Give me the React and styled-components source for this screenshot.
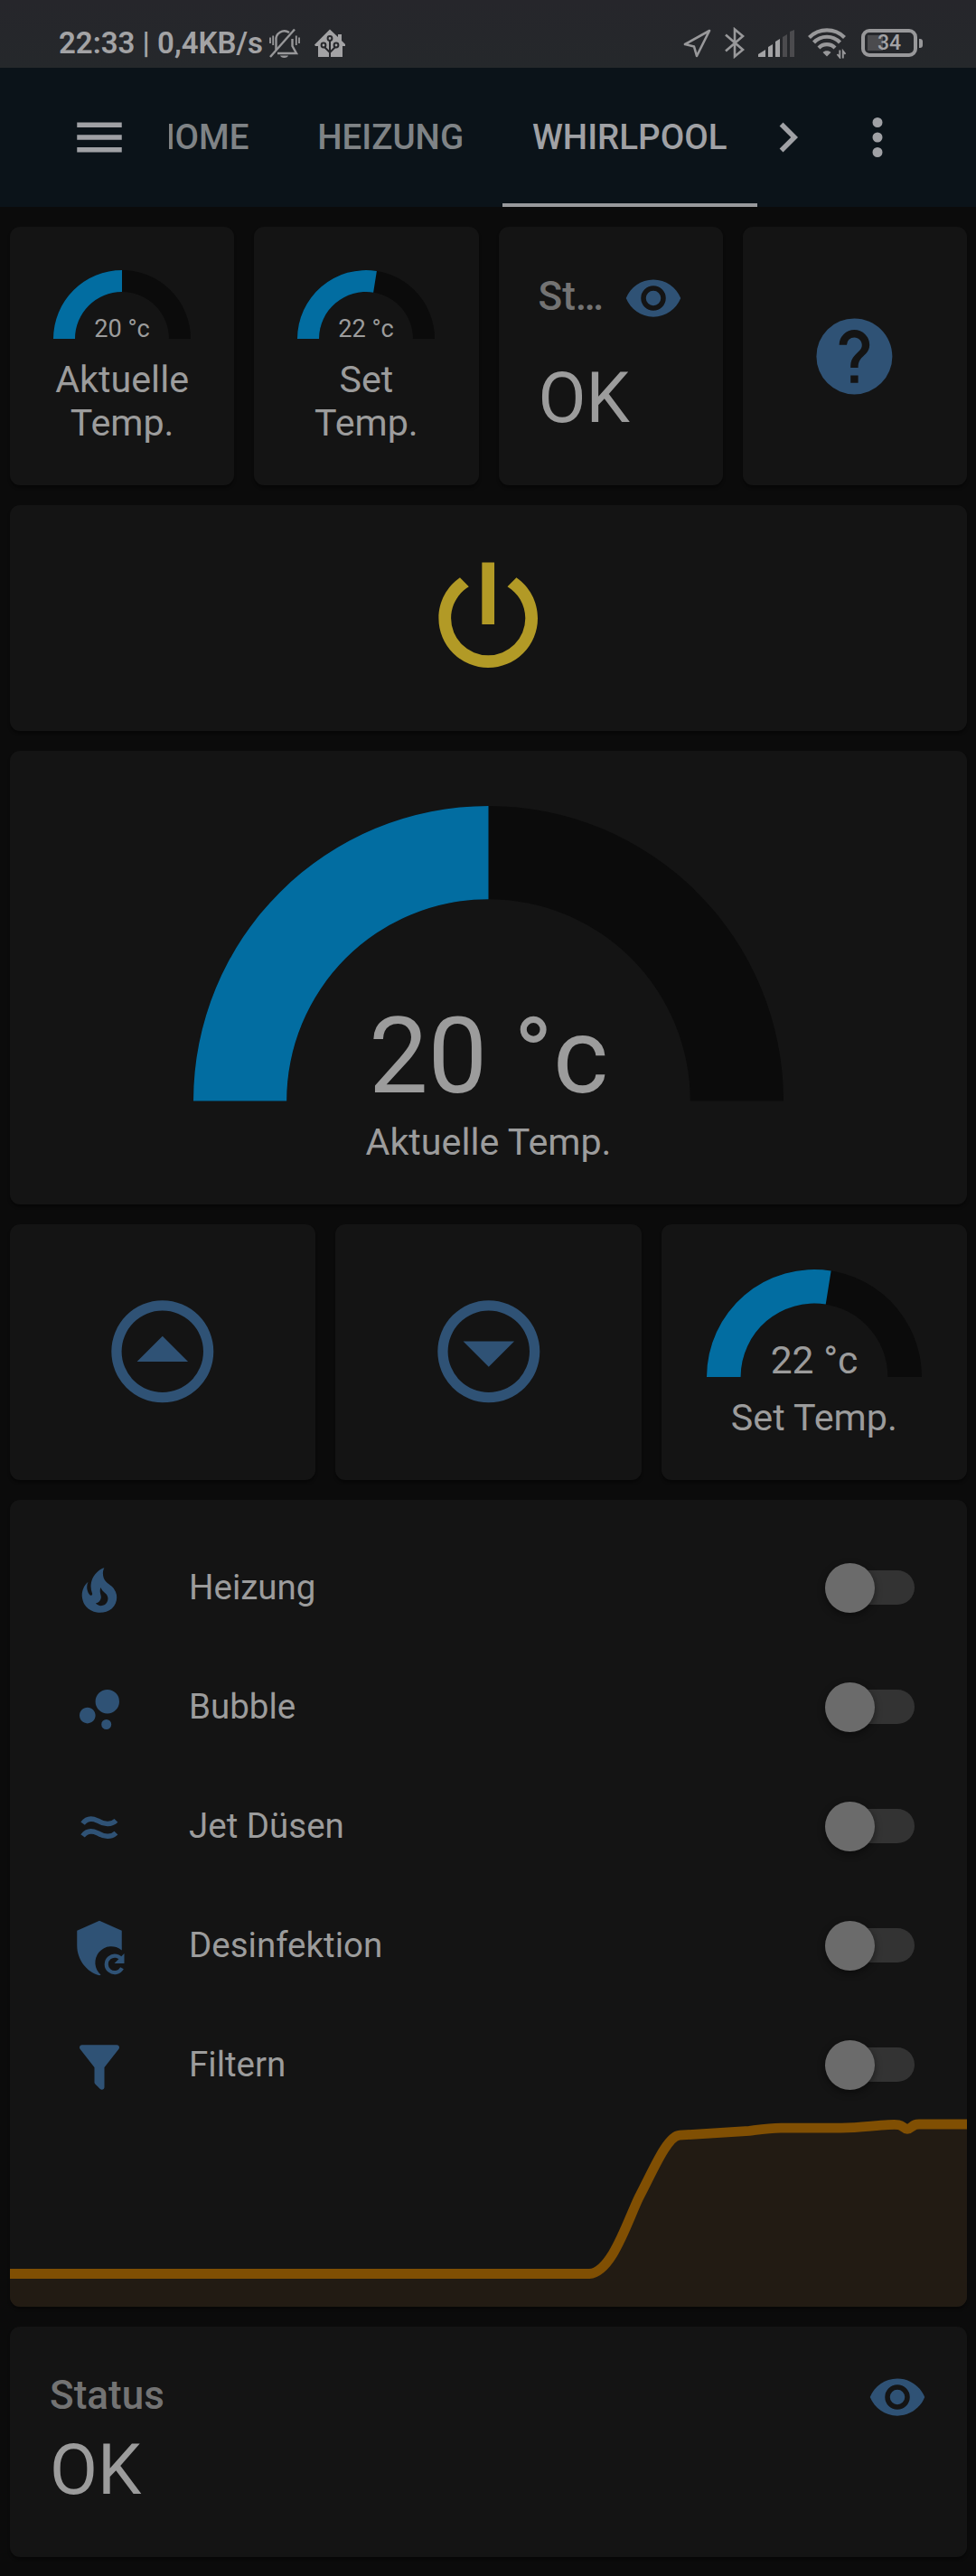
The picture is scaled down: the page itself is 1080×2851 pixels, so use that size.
import React from "react";
import styled, { createGlobalStyle } from "styled-components";

const color = {
  page: "#0b0b0b",
  card: "#141414",
  header: "#0b1319",
  text: "#9c9c9c",
  muted: "#737373",
  icon: "#2f5275",
  active: "#b29a26",
  gauge: "#026da1",
};

const GlobalStyle = createGlobalStyle`
  *, *::before, *::after { box-sizing: border-box; }
  body {
    margin: 0;
    background: ${color.page};
    color: ${color.text};
    font-family: Roboto, "Liberation Sans", sans-serif;
  }
  svg { display: block; flex: none; }
`;

const Screen = styled.div`
  width: 1080px;
  height: 2851px;
  overflow: hidden;
  background: ${color.page};
`;

/* ---------- system status bar ---------- */

const StatusBar = styled.div`
  display: flex;
  align-items: center;
  height: 75px;
  padding: 20px 59px 0 65px;
  background: linear-gradient(#26262b, #25282b);
  color: #a3a3a5;
`;

const Clock = styled.span`
  width: 228px;
  font-size: 33px;
  font-weight: 600;
  line-height: 40px;
  white-space: nowrap;
`;

const StatusIcons = styled.div`
  display: flex;
  align-items: center;
  gap: ${(p) => p.$gap}px;
  margin-left: ${(p) => (p.$end ? "auto" : "5px")};
`;

const Battery = styled.div`
  display: flex;
  align-items: center;
  gap: 2px;
  margin-left: 2px;
`;

const BatteryBody = styled.div`
  display: flex;
  align-items: center;
  justify-content: center;
  width: 62px;
  height: 31px;
  border: 4px solid #98989a;
  border-radius: 9px;
  background: linear-gradient(90deg, #4b4b4e 17px, transparent 17px) 3px 3px / 48px 17px no-repeat;
  font-size: 23px;
  font-weight: 500;
  line-height: 23px;
`;

const BatteryNub = styled.div`
  width: 4px;
  height: 10px;
  border-radius: 0 3px 3px 0;
  background: #98989a;
`;

/* ---------- app header ---------- */

const Header = styled.header`
  display: flex;
  align-items: center;
  height: 154px;
  padding-left: 77px;
  background: ${color.header};
  color: #a0a1a5;
`;

const Tabs = styled.nav`
  display: flex;
  align-items: stretch;
  justify-content: flex-end;
  width: 650.5px;
  height: 154px;
  margin-left: 44px;
  overflow: hidden;
`;

const Tab = styled.div`
  flex: none;
  min-width: ${(p) => p.$min || 0}px;
  padding: 4px 33px 0;
  border-bottom: 4px solid ${(p) => (p.$active ? "#98999c" : "transparent")};
  color: ${(p) => (p.$active ? "#a0a1a5" : "#7f8386")};
  font-size: 38.5px;
  font-weight: 500;
  line-height: 146px;
  text-align: center;
`;

const HeaderAction = styled.div`
  margin-left: ${(p) => p.$left}px;
`;

/* ---------- dashboard ---------- */

const Dashboard = styled.main`
  display: flex;
  flex-direction: column;
  gap: 22px;
  padding: 22px 10px 0 11px;
`;

const CardRow = styled.div`
  display: grid;
  grid-template-columns: repeat(${(p) => p.$columns}, 1fr);
  gap: 22px;
`;

const Card = styled.section`
  min-width: 0;
  height: ${(p) => p.$height}px;
  border-radius: 11px;
  background: ${color.card};
  box-shadow: 0 3px 3px rgba(0, 0, 0, 0.35);
`;

const ButtonCard = styled(Card)`
  display: flex;
  align-items: center;
  justify-content: center;
  color: ${(p) => (p.$on ? color.active : color.icon)};
`;

const GaugeCard = styled(Card)`
  display: flex;
  flex-direction: column;
  align-items: center;
  padding: ${(p) => p.$top}px 44px 0;
`;

const GaugeName = styled.div`
  margin-top: 21px;
  font-size: 41.25px;
  line-height: 48px;
  text-align: center;
`;

const EntityCard = styled(Card)`
  padding: ${(p) => p.$top}px 44px 0;
`;

const EntityHeader = styled.div`
  display: flex;
  align-items: center;
  justify-content: space-between;
  gap: 16px;
  color: ${color.icon};
`;

const EntityName = styled.div`
  min-width: 0;
  padding-bottom: 4px;
  overflow: hidden;
  color: ${color.muted};
  font-size: 44px;
  font-weight: 500;
  line-height: 52px;
  text-overflow: ellipsis;
  white-space: nowrap;
`;

const EntityState = styled.div`
  margin-top: ${(p) => p.$gap}px;
  font-size: 77px;
  line-height: 90px;
`;

const ListCard = styled(Card)`
  display: flex;
  flex-direction: column;
  justify-content: space-between;
  padding-top: 44px;
  overflow: hidden;
`;

const Rows = styled.div`
  display: flex;
  flex-direction: column;
  gap: 22px;
  padding: 0 45px 0 44px;
`;

const Row = styled.div`
  display: flex;
  align-items: center;
  height: 110px;
`;

const RowIcon = styled.div`
  width: 110px;
  padding: 2px 22px 0;
  color: ${color.icon};
`;

const RowName = styled.div`
  flex: 1;
  padding-left: 44px;
  padding-bottom: 4px;
  font-size: 38.5px;
  line-height: 46px;
`;

const Switch = styled.div`
  display: flex;
  align-items: center;
  width: 99px;
  height: 38px;
  margin: 0 13px 3px 0;
  border-radius: 19px;
  background: #333;
`;

const Thumb = styled.div`
  flex: none;
  width: 55px;
  height: 55px;
  border-radius: 50%;
  background: #6b6b6b;
  box-shadow: 0 3px 9px rgba(0, 0, 0, 0.45);
`;

/* ---------- drawings ---------- */

const paths = {
  menu: "M3,6H21V8H3V6M3,11H21V13H3V11M3,16H21V18H3V16Z",
  chevron: "M8.59,16.58L13.17,12L8.59,7.41L10,6L16,12L10,18L8.59,16.58Z",
  dots: "M12,16A2,2 0 0,1 14,18A2,2 0 0,1 12,20A2,2 0 0,1 10,18A2,2 0 0,1 12,16M12,10A2,2 0 0,1 14,12A2,2 0 0,1 12,14A2,2 0 0,1 10,12A2,2 0 0,1 12,10M12,4A2,2 0 0,1 14,6A2,2 0 0,1 12,8A2,2 0 0,1 10,6A2,2 0 0,1 12,4Z",
  eye: "M12,9A3,3 0 0,0 9,12A3,3 0 0,0 12,15A3,3 0 0,0 15,12A3,3 0 0,0 12,9M12,17A5,5 0 0,1 7,12A5,5 0 0,1 12,7A5,5 0 0,1 17,12A5,5 0 0,1 12,17M12,4.5C7,4.5 2.73,7.61 1,12C2.73,16.39 7,19.5 12,19.5C17,19.5 21.27,16.39 23,12C21.27,7.61 17,4.5 12,4.5Z",
  help: "M15.07,11.25L14.17,12.17C13.45,12.89 13,13.5 13,15H11V14.5C11,13.39 11.45,12.39 12.17,11.67L13.41,10.41C13.78,10.05 14,9.55 14,9C14,7.89 13.1,7 12,7A2,2 0 0,0 10,9H8A4,4 0 0,1 12,5A4,4 0 0,1 16,9C16,9.88 15.64,10.67 15.07,11.25M13,19H11V17H13M12,2A10,10 0 0,0 2,12A10,10 0 0,0 12,22A10,10 0 0,0 22,12C22,6.47 17.5,2 12,2Z",
  power: "M16.56,5.44L15.11,6.89C16.84,7.94 18,9.83 18,12A6,6 0 0,1 12,18A6,6 0 0,1 6,12C6,9.83 7.16,7.94 8.88,6.88L7.44,5.44C5.36,6.88 4,9.28 4,12A8,8 0 0,0 12,20A8,8 0 0,0 20,12C20,9.28 18.64,6.88 16.56,5.44M13,3H11V13H13",
  up: "M12,20A8,8 0 0,0 20,12A8,8 0 0,0 12,4A8,8 0 0,0 4,12A8,8 0 0,0 12,20M12,22A10,10 0 0,1 2,12A10,10 0 0,1 12,2A10,10 0 0,1 22,12A10,10 0 0,1 12,22M7,14L12,9L17,14H7Z",
  down: "M12,20A8,8 0 0,0 20,12A8,8 0 0,0 12,4A8,8 0 0,0 4,12A8,8 0 0,0 12,20M12,22A10,10 0 0,1 2,12A10,10 0 0,1 12,2A10,10 0 0,1 22,12A10,10 0 0,1 12,22M7,10L12,15L17,10H7Z",
  fire: "M17.66 11.2C17.43 10.9 17.15 10.64 16.89 10.38C16.22 9.78 15.46 9.35 14.82 8.72C13.33 7.26 13 4.85 13.95 3C13 3.23 12.17 3.75 11.46 4.32C8.87 6.4 7.85 10.07 9.07 13.22C9.11 13.32 9.15 13.42 9.15 13.55C9.15 13.77 9 13.97 8.8 14.05C8.57 14.15 8.33 14.09 8.14 13.93C8.08 13.88 8.04 13.83 8 13.76C6.87 12.33 6.69 10.28 7.45 8.64C5.78 10 4.87 12.3 5 14.47C5.06 14.97 5.12 15.47 5.29 15.97C5.43 16.57 5.7 17.17 6 17.7C7.08 19.43 8.95 20.67 10.96 20.92C13.1 21.19 15.39 20.8 17.03 19.32C18.86 17.66 19.5 15 18.56 12.72L18.43 12.46C18.22 12 17.66 11.2 17.66 11.2M14.5 17.5C14.22 17.74 13.76 18 13.4 18.1C12.28 18.5 11.16 17.94 10.5 17.28C11.69 17 12.4 16.12 12.61 15.23C12.78 14.43 12.46 13.77 12.33 13C12.21 12.26 12.23 11.63 12.5 10.94C12.69 11.32 12.89 11.7 13.13 12C13.9 13 15.11 13.44 15.37 14.8C15.41 14.94 15.43 15.08 15.43 15.23C15.46 16.05 15.1 16.95 14.5 17.5H14.5Z",
  bubble: "M7.2,11.2C8.97,11.2 10.4,12.63 10.4,14.4C10.4,16.17 8.97,17.6 7.2,17.6C5.43,17.6 4,16.17 4,14.4C4,12.63 5.43,11.2 7.2,11.2M14.8,16A2,2 0 0,1 16.8,18A2,2 0 0,1 14.8,20A2,2 0 0,1 12.8,18A2,2 0 0,1 14.8,16M15.2,4A4.8,4.8 0 0,1 20,8.8C20,11.45 17.85,13.6 15.2,13.6A4.8,4.8 0 0,1 10.4,8.8C10.4,6.15 12.55,4 15.2,4Z",
  filter: "M14,12V19.88C14.04,20.18 13.94,20.5 13.71,20.71C13.32,21.1 12.69,21.1 12.3,20.71L10.29,18.7C10.06,18.47 9.96,18.16 10,17.87V12H9.97L4.21,4.62C3.87,4.19 3.95,3.56 4.38,3.22C4.57,3.08 4.78,3 5,3V3H19V3C19.22,3 19.43,3.08 19.62,3.22C20.05,3.56 20.13,4.19 19.79,4.62L14.03,12H14Z",
};

const Icon = ({ name, size = 66 }) => (
  <svg width={size} height={size} viewBox="0 0 24 24" fill="currentColor">
    <path d={paths[name]} />
  </svg>
);

const WavesIcon = () => (
  <svg width="66" height="66" viewBox="0 0 24 24" fill="none" stroke="currentColor" strokeWidth="2">
    <path d="M5.3 9.9C6.6 8.1 8.6 7.5 11.2 8.7C13.8 10.3 16.8 10.6 18.7 8.7" />
    <path d="M5.3 14.9C6.600 13.100 8.600 12.500 11.200 13.700C13.800 15.300 16.800 15.600 18.700 13.700" />
  </svg>
);

const ShieldRefreshIcon = () => (
  <svg width="66" height="66" viewBox="0 0 24 24" fill="currentColor">
    <path d="M12,1L3,5V11C3,16.55 6.84,21.74 12,23L12.6,22.8A6.1,6.1 0 0,1 21,12.9C21.05,12.3 21,11.6 21,11V5L12,1Z" />
    <path
      d="M21.1 16.9A3.35 3.35 0 1 0 21.1 20.1"
      fill="none"
      stroke="currentColor"
      strokeWidth="1.5"
    />
    <path d="M22 14.2V18.2H18L22 14.2Z" />
  </svg>
);

const BellOffIcon = () => (
  <svg width="34" height="34" viewBox="0 0 34 34" fill="none" stroke="#98989a" strokeWidth="2.4">
    <path d="M7.5 24V14A9.3 9.3 0 0 1 22 5" />
    <path d="M25.5 12V20L30 28H9" />
    <path d="M1 32L28 1.5" />
    <path d="M12 30.5H21A4.6 3 0 0 1 12 30.5Z" fill="#98989a" stroke="none" />
    <path d="M1 10.5V17M4.2 8.5V19M33 10.5V17M29.8 8.5V19" strokeWidth="1.8" />
  </svg>
);

const HomeAssistantIcon = () => (
  <svg width="34" height="32" viewBox="0 0 34 32">
    <path d="M17 .5L0 17.5L1 19H4V31H31V19H34V17L30 13V6H26V9Z" fill="#a3a3a5" />
    <g fill="none" stroke="#26272b" strokeWidth="2">
      <path d="M17 31V12M17 26L10 19M17 26L24 19" />
      <circle cx="17" cy="10.5" r="2.4" fill="#a3a3a5" />
      <circle cx="10" cy="18" r="2.4" fill="#a3a3a5" />
      <circle cx="24" cy="18" r="2.4" fill="#a3a3a5" />
    </g>
  </svg>
);

const LocationIcon = () => (
  <svg width="31" height="32" viewBox="0 0 31 32" fill="none" stroke="#98989a" strokeWidth="2.6" strokeLinejoin="round">
    <path d="M29 2L2 17L12 19.5L15 30Z" />
  </svg>
);

const BluetoothIcon = () => (
  <svg width="22" height="35" viewBox="0 0 22 35" fill="none" stroke="#98989a" strokeWidth="2.6">
    <path d="M1 8.5L20 25L11 32.5V2.5L20 10L1 26.5" />
  </svg>
);

const SignalIcon = () => (
  <svg width="40" height="30" viewBox="0 0 40 30" fill="#a3a3a5">
    <path d="M0 30V27L8 22V30ZM11 19L16 16V30H11ZM19 13L24 10V30H19Z" />
    <path d="M27 8L32 5V30H27ZM35 2L40 0V30H35Z" fill="#4b4b4e" />
  </svg>
);

const WifiIcon = () => (
  <svg width="42" height="34" viewBox="0 0 42 34" fill="none" stroke="#98989a" strokeWidth="4.2">
    <path d="M1.5 10.5A27.5 27.5 0 0 1 40.5 10.5" />
    <path d="M6.5 16A20 20 0 0 1 35.5 16" />
    <path d="M12 22A12.5 12.5 0 0 1 30 22" />
    <path d="M16.5 27C18.5 24.5 23.5 24.5 25.5 27L21 31.5Z" fill="#98989a" stroke="none" />
    <path d="M35.3 24.5V32.5L32.5 29M38.8 33.5V25.5L41.5 29" strokeWidth="1.9" />
  </svg>
);

const GaugeDial = styled.svg`
  overflow: visible;
`;

const GaugeValue = styled.text`
  fill: ${color.text};
  font-size: 17.9px;
  text-anchor: middle;
`;

const OUTER = 50;
const INNER = 34.2;

const ring = (from, to) => {
  const at = (r, share) => {
    const a = Math.PI * (1 - share);
    return `${(r * Math.cos(a)).toFixed(3)} ${(-r * Math.sin(a)).toFixed(3)}`;
  };
  return `M${at(OUTER, from)}A${OUTER} ${OUTER} 0 0 1 ${at(OUTER, to)}L${at(INNER, to)}A${INNER} ${INNER} 0 0 0 ${at(INNER, from)}Z`;
};

const Gauge = ({ value, max = 40, radius }) => (
  <GaugeDial width={radius * 2} height={radius} viewBox="-50 -50 100 50">
    <path d={ring(0, 1)} fill={color.page} />
    <path d={ring(0, value / max)} fill={color.gauge} />
    <GaugeValue x="0" y="-1.5">{value} °c</GaugeValue>
  </GaugeDial>
);

const line =
  "M0 174.5H641C666 173 683 117 696 90C711 62 727 22 741 21.2L818 16.300C832 14.5 840 13.2 853 13.1H920C940 13 955 10.5 972 9.6C984 9 985 9.5 989 12.5Q993 16 997 12.5C1001 9.5 1002 9 1006 9H1059";

const HistoryGraph = () => (
  <svg width="1059" height="212" viewBox="0 0 1059 212" fill="none">
    <path d={`${line}V212H0Z`} fill="#221b13" />
    <path d={line} stroke="#804f03" strokeWidth="10.8" />
  </svg>
);

const Entity = ({ height, top, gap }) => (
  <EntityCard $height={height} $top={top}>
    <EntityHeader>
      <EntityName>Status</EntityName>
      <Icon name="eye" />
    </EntityHeader>
    <EntityState $gap={gap}>OK</EntityState>
  </EntityCard>
);

const switches = [
  { name: "Heizung", icon: <Icon name="fire" /> },
  { name: "Bubble", icon: <Icon name="bubble" /> },
  { name: "Jet Düsen", icon: <WavesIcon /> },
  { name: "Desinfektion", icon: <ShieldRefreshIcon /> },
  { name: "Filtern", icon: <Icon name="filter" /> },
];

export default function App() {
  return (
    <Screen>
      <GlobalStyle />
      <StatusBar>
        <Clock>22:33 | 0,4KB/s</Clock>
        <StatusIcons $gap={16}>
          <BellOffIcon />
          <HomeAssistantIcon />
        </StatusIcons>
        <StatusIcons $gap={15} $end>
          <LocationIcon />
          <BluetoothIcon />
          <SignalIcon />
          <WifiIcon />
          <Battery>
            <BatteryBody>34</BatteryBody>
            <BatteryNub />
          </Battery>
        </StatusIcons>
      </StatusBar>
      <Header>
        <Icon name="menu" />
        <Tabs>
          <Tab>HOME</Tab>
          <Tab $min={247.5}>HEIZUNG</Tab>
          <Tab $active>WHIRLPOOL</Tab>
        </Tabs>
        <HeaderAction $left={1.5}><Icon name="chevron" /></HeaderAction>
        <HeaderAction $left={33}><Icon name="dots" /></HeaderAction>
      </Header>
      <Dashboard>
        <CardRow $columns={4}>
          <GaugeCard $height={286} $top={48}>
            <Gauge value={20} radius={76} />
            <GaugeName>Aktuelle Temp.</GaugeName>
          </GaugeCard>
          <GaugeCard $height={286} $top={48}>
            <Gauge value={22} radius={76} />
            <GaugeName>Set Temp.</GaugeName>
          </GaugeCard>
          <Entity height={286} top={46} gap={33} />
          <ButtonCard $height={286}><Icon name="help" size={100.8} /></ButtonCard>
        </CardRow>
        <ButtonCard $height={250} $on><Icon name="power" size={164.4} /></ButtonCard>
        <GaugeCard $height={501.5} $top={61}>
          <Gauge value={20} radius={326.5} />
          <GaugeName>Aktuelle Temp.</GaugeName>
        </GaugeCard>
        <CardRow $columns={3}>
          <ButtonCard $height={283}><Icon name="up" size={135.6} /></ButtonCard>
          <ButtonCard $height={283}><Icon name="down" size={135.6} /></ButtonCard>
          <GaugeCard $height={283} $top={50}>
            <Gauge value={22} radius={119} />
            <GaugeName>Set Temp.</GaugeName>
          </GaugeCard>
        </CardRow>
        <ListCard $height={893.5}>
          <Rows>
            {switches.map((s) => (
              <Row key={s.name}>
                <RowIcon>{s.icon}</RowIcon>
                <RowName>{s.name}</RowName>
                <Switch><Thumb /></Switch>
              </Row>
            ))}
          </Rows>
          <HistoryGraph />
        </ListCard>
        <Entity height={254.5} top={45} gap={3} />
      </Dashboard>
    </Screen>
  );
}
